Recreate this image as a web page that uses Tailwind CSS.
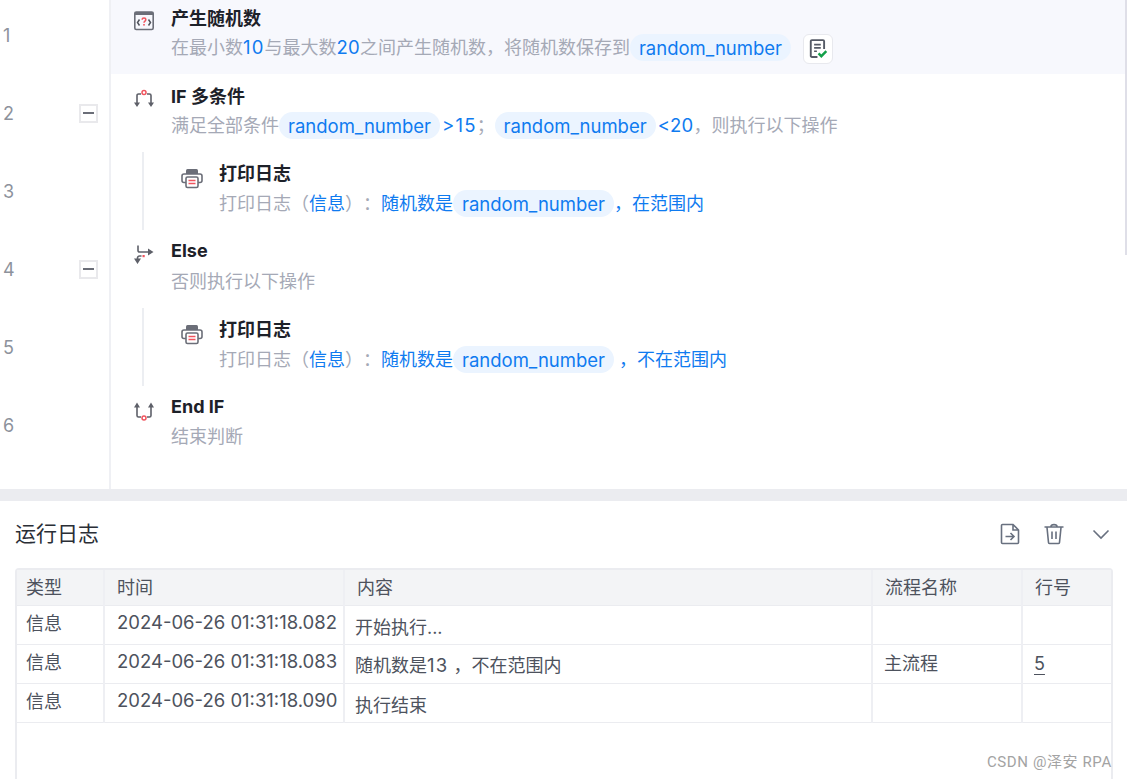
<!DOCTYPE html>
<html lang="zh-CN">

<head>
  <title>运行日志</title>
  <meta charset="UTF-8" />
  <script src="https://cdn.jsdelivr.net/npm/@tailwindcss/browser@4"></script>
</head>

<body class="relative h-[779px] w-[1127px] overflow-hidden bg-white font-['Inter','Noto_Sans_CJK_SC',sans-serif] [text-spacing-trim:space-all]">
  <!-- FLOW -->
  <div class="h-[489px] overflow-hidden">
    <div class="-mt-[4px]">
      <!-- row 1 -->
      <div class="flex h-[78px]">
        <div class="flex w-[111px] shrink-0 items-center border-r-2 border-r-[#eff0f4] pl-[3px] text-[18px] text-[#8d929c]">1</div>
        <div class="flex flex-1 bg-[#f7f8fd] pl-[23px]">
          <svg class="mt-[15px] h-[20px] w-[20px] shrink-0" viewBox="0 0 20 20" fill="none">
            <rect x="0.800" y="1" width="18.400" height="17.500" rx="1.500" stroke="#6b6e78" stroke-width="1.600" />
            <rect x="0.800" y="1" width="18.400" height="3" fill="#6b6e78" />
            <path d="M5.500 8.500 3.500 11.500l2 3M14.500 8.500l2 3-2 3" stroke="#50535c" stroke-width="1.500" />
            <path d="M8.200 8.800c0-2.300 3.600-2.300 3.600 0 0 1.400-1.800 1.300-1.800 3" stroke="#f0555f" stroke-width="1.500" />
            <rect x="9.200" y="13" width="1.600" height="1.600" fill="#f0555f" />
          </svg>
          <div class="ml-[17px] min-w-0">
            <div class="mt-[10px] h-[26px] text-[18px] leading-[26px] font-bold text-[#1d2129]">产生随机数</div>
            <div class="mt-[2px] flex h-[27px] items-start text-[18px] leading-[27px] whitespace-nowrap text-[#a5a9b6]">
              <span>在最小数</span><span class="text-[18.5px] tracking-[1.200px] text-[#0f7bf0]">10</span><span>与最大数</span><span class="text-[18.5px] tracking-[0.200px] text-[#0f7bf0]">20</span><span>之间产生随机数，将随机数保存到</span>
              <span class="flex h-[27px] w-[161px] items-center justify-center rounded-full bg-[#ebf4ff] pt-[2px] text-[18.5px] text-[#0f7bf0]">random_number</span>
              <span class="ml-[12px] flex h-[30px] w-[30px] items-center justify-center rounded-[6px] border border-[#e8e9ee] bg-white">
                <svg class="h-[20px] w-[20px]" viewBox="0 0 18 18" fill="none">
                  <path d="M8.500 16.200H3.500a1 1 0 0 1-1-1V2a1 1 0 0 1 1-1h10a1 1 0 0 1 1 1v7" stroke="#555a66" stroke-width="1.700" />
                  <path d="M5.500 5h6M5.500 8h6M5.500 11h2.500" stroke="#555a66" stroke-width="1.500" />
                  <path d="M9.500 13 12 15.500l4.500-4.500" stroke="#13a04a" stroke-width="2.200" />
                </svg>
              </span>
            </div>
          </div>
        </div>
      </div>
      <!-- row 2 -->
      <div class="flex h-[78px]">
        <div class="flex w-[111px] shrink-0 items-center justify-between border-r-2 border-r-[#eff0f4] pr-[11px] pl-[3px] text-[18px] text-[#8d929c]">
          <span>2</span>
          <span class="flex h-[19px] w-[19px] items-center justify-center border-2 border-[#e9e9ec]"><span class="h-[2px] w-[11px] bg-[#6b6e78]"></span></span>
        </div>
        <div class="flex flex-1 pl-[23px]">
          <svg class="mt-[15px] h-[20px] w-[20px] shrink-0" viewBox="0 0 20 20" fill="none">
            <path d="M3 15V6.500A1.500 1.500 0 0 1 4.500 5H7M17 15V6.500A1.500 1.500 0 0 0 15.500 5H13" stroke="#5e6069" stroke-width="1.600" />
            <path d="M0 13.500h6L3 18zM14 13.500h6L17 18z" fill="#5e6069" />
            <circle cx="10" cy="3.500" r="2" stroke="#f0555f" stroke-width="1.500" fill="#fff" />
          </svg>
          <div class="ml-[17px] min-w-0">
            <div class="mt-[10px] h-[26px] text-[18px] leading-[26px] font-bold text-[#1d2129]">IF 多条件</div>
            <div class="mt-[2px] flex h-[27px] items-center text-[18px] whitespace-nowrap text-[#a5a9b6]">
              <span>满足全部条件</span>
              <span class="flex h-[27px] w-[161px] items-center justify-center rounded-full bg-[#ebf4ff] pt-[2px] text-[18.5px] text-[#0f7bf0]">random_number</span>
              <span class="ml-[2px] text-[18.5px] tracking-[1.200px] text-[#0f7bf0]">&gt;15</span><span class="w-[18px]">；</span>
              <span class="flex h-[27px] w-[161px] items-center justify-center rounded-full bg-[#ebf4ff] pt-[2px] text-[18.5px] text-[#0f7bf0]">random_number</span>
              <span class="ml-[2px] text-[18.5px] tracking-[0.200px] text-[#0f7bf0]">&lt;20</span><span>，则执行以下操作</span>
            </div>
          </div>
        </div>
      </div>
      <!-- row 3 -->
      <div class="flex h-[78px]">
        <div class="flex w-[111px] shrink-0 items-center border-r-2 border-r-[#eff0f4] pl-[3px] text-[18px] text-[#8d929c]">3</div>
        <div class="ml-[31px] flex flex-1 border-l-2 border-l-[#eceef2] pl-[37px]">
          <svg class="mt-[15px] h-[22px] w-[22px] shrink-0" viewBox="0 0 22 22" fill="none">
            <path d="M5 7V3.500A1.500 1.500 0 0 1 6.500 2h9A1.500 1.500 0 0 1 17 3.500V7" fill="#6b6e78" />
            <path d="M5 15.500H3a2 2 0 0 1-2-2V9a2 2 0 0 1 2-2h16a2 2 0 0 1 2 2v4.500a2 2 0 0 1-2 2h-2" stroke="#6b6e78" stroke-width="1.600" />
            <rect x="5" y="10" width="12" height="10.500" rx="1.500" stroke="#6b6e78" stroke-width="1.600" fill="#fff" />
            <path d="M7.500 13.500h7M7.500 16.500h7" stroke="#f0555f" stroke-width="1.600" />
          </svg>
          <div class="ml-[16px] min-w-0">
            <div class="mt-[9px] h-[26px] text-[18px] leading-[26px] font-bold text-[#1d2129]">打印日志</div>
            <div class="mt-[3px] flex h-[27px] items-center text-[18px] whitespace-nowrap text-[#a5a9b6]">
              <span>打印日志（</span><span class="text-[#0f7bf0]">信息</span><span>）：</span><span class="text-[#0f7bf0]">随机数是</span>
              <span class="flex h-[27px] w-[161px] items-center justify-center rounded-full bg-[#ebf4ff] pt-[2px] text-[18.5px] text-[#0f7bf0]">random_number</span>
              <span class="text-[#0f7bf0]">，在范围内</span>
            </div>
          </div>
        </div>
      </div>
      <!-- row 4 -->
      <div class="flex h-[78px]">
        <div class="flex w-[111px] shrink-0 items-center justify-between border-r-2 border-r-[#eff0f4] pr-[11px] pl-[3px] text-[18px] text-[#8d929c]">
          <span>4</span>
          <span class="flex h-[19px] w-[19px] items-center justify-center border-2 border-[#e9e9ec]"><span class="h-[2px] w-[11px] bg-[#6b6e78]"></span></span>
        </div>
        <div class="flex flex-1 pl-[23px]">
          <svg class="mt-[15px] h-[20px] w-[20px] shrink-0" viewBox="0 0 20 20" fill="none">
            <path d="M4 0.500v5a1.500 1.500 0 0 0 1.500 1.500h9" stroke="#5e6069" stroke-width="1.600" />
            <path d="M14 3.500v7L19.500 7zM0 13.500h7L3.500 19z" fill="#5e6069" />
            <path d="M3.500 15v-2a2 2 0 0 1 2-2h2" stroke="#5e6069" stroke-width="1.600" />
            <rect x="8.500" y="10" width="2.200" height="2.200" fill="#f0555f" />
          </svg>
          <div class="ml-[17px] min-w-0">
            <div class="mt-[8px] h-[26px] text-[18px] leading-[26px] font-bold text-[#1d2129]">Else</div>
            <div class="mt-[4px] flex h-[27px] items-center text-[18px] whitespace-nowrap text-[#a5a9b6]">否则执行以下操作</div>
          </div>
        </div>
      </div>
      <!-- row 5 -->
      <div class="flex h-[78px]">
        <div class="flex w-[111px] shrink-0 items-center border-r-2 border-r-[#eff0f4] pl-[3px] text-[18px] text-[#8d929c]">5</div>
        <div class="ml-[31px] flex flex-1 border-l-2 border-l-[#eceef2] pl-[37px]">
          <svg class="mt-[15px] h-[22px] w-[22px] shrink-0" viewBox="0 0 22 22" fill="none">
            <path d="M5 7V3.500A1.500 1.500 0 0 1 6.500 2h9A1.500 1.500 0 0 1 17 3.500V7" fill="#6b6e78" />
            <path d="M5 15.500H3a2 2 0 0 1-2-2V9a2 2 0 0 1 2-2h16a2 2 0 0 1 2 2v4.500a2 2 0 0 1-2 2h-2" stroke="#6b6e78" stroke-width="1.600" />
            <rect x="5" y="10" width="12" height="10.500" rx="1.500" stroke="#6b6e78" stroke-width="1.600" fill="#fff" />
            <path d="M7.500 13.500h7M7.500 16.500h7" stroke="#f0555f" stroke-width="1.600" />
          </svg>
          <div class="ml-[16px] min-w-0">
            <div class="mt-[9px] h-[26px] text-[18px] leading-[26px] font-bold text-[#1d2129]">打印日志</div>
            <div class="mt-[3px] flex h-[27px] items-center text-[18px] whitespace-nowrap text-[#a5a9b6]">
              <span>打印日志（</span><span class="text-[#0f7bf0]">信息</span><span>）：</span><span class="text-[#0f7bf0]">随机数是</span>
              <span class="flex h-[27px] w-[161px] items-center justify-center rounded-full bg-[#ebf4ff] pt-[2px] text-[18.5px] text-[#0f7bf0]">random_number</span>
              <span class="ml-[5px] text-[#0f7bf0]">，不在范围内</span>
            </div>
          </div>
        </div>
      </div>
      <!-- row 6 -->
      <div class="flex h-[103px]">
        <div class="w-[111px] shrink-0 border-r-2 border-r-[#eff0f4] pt-[26px] pl-[3px] text-[18px] leading-[27px] text-[#8d929c]">6</div>
        <div class="flex flex-1 pl-[23px]">
          <svg class="mt-[16px] h-[20px] w-[20px] shrink-0" viewBox="0 0 20 20" fill="none">
            <path d="M3 3v10.500A1.500 1.500 0 0 0 4.500 15H7M17 3v10.500a1.500 1.500 0 0 1-1.500 1.500H13" stroke="#5e6069" stroke-width="1.600" />
            <path d="M0 5.500h6L3 0.500zM14 5.500h6L17 0.500z" fill="#5e6069" />
            <circle cx="10" cy="16" r="2" stroke="#f0555f" stroke-width="1.500" fill="#fff" />
          </svg>
          <div class="ml-[17px] min-w-0">
            <div class="mt-[8px] h-[26px] text-[18px] leading-[26px] font-bold text-[#1d2129]">End IF</div>
            <div class="mt-[3px] flex h-[27px] items-center text-[18px] whitespace-nowrap text-[#a5a9b6]">结束判断</div>
          </div>
        </div>
      </div>
    </div>
  </div>

  <!-- scrollbar thumb -->
  <div class="absolute top-0 right-0 h-[255px] w-[2px] bg-[#dfdfe8]"></div>

  <!-- divider -->
  <div class="h-[12px] bg-[#ebecf0]"></div>

  <!-- LOG -->
  <div class="px-[15px]">
    <div class="flex h-[67px] items-center justify-between pb-[2px]">
      <h2 class="text-[21px] text-[#2a2e36]">运行日志</h2>
      <div class="flex items-center pr-[1px]">
        <svg class="h-[22px] w-[22px]" viewBox="0 0 22 22" fill="none" stroke="#68707f" stroke-width="1.600">
          <path d="M14 1.500H3.500a1 1 0 0 0-1 1v17a1 1 0 0 0 1 1h15a1 1 0 0 0 1-1V7zM14 1.500V7h5.500" />
          <path d="M6.500 13.500h8.500M11.500 10l3.500 3.500-3.500 3.500" />
        </svg>
        <svg class="ml-[22px] h-[22px] w-[22px]" viewBox="0 0 22 22" fill="none" stroke="#68707f" stroke-width="1.600">
          <path d="M1.500 4h19M8 3.500c0-2.500 6-2.500 6 0M4 4.500l1.500 15a1 1 0 0 0 1 1h9a1 1 0 0 0 1-1l1.500-15M9 8.500v7.500M13 8.500v7.500" />
        </svg>
        <svg class="ml-[26px] h-[20px] w-[20px]" viewBox="0 0 20 20" fill="none" stroke="#68707f" stroke-width="1.600">
          <path d="M2.500 6.500 10 14l7.500-7.500" />
        </svg>
      </div>
    </div>
    <div class="h-[211px] w-[1098px] rounded-t-[4px] border-2 border-b-0 border-[#ebecf0]">
      <table class="w-[1094px] table-fixed border-collapse text-left text-[18px] text-[#4d525d]">
        <colgroup>
          <col class="w-[87px]" />
          <col class="w-[240px]" />
          <col class="w-[528px]" />
          <col class="w-[150px]" />
          <col />
        </colgroup>
        <thead class="bg-[#f3f4f6]">
          <tr class="h-[35px] border-b border-b-[#ebecf0]">
            <th class="border-r-2 border-r-[#eeeff3] pl-[9px] font-normal">类型</th>
            <th class="border-r-2 border-r-[#eeeff3] pl-[12px] font-normal">时间</th>
            <th class="border-r-2 border-r-[#eeeff3] pl-[12px] font-normal">内容</th>
            <th class="border-r-2 border-r-[#eeeff3] pl-[12px] font-normal">流程名称</th>
            <th class="pl-[12px] font-normal">行号</th>
          </tr>
        </thead>
        <tbody>
          <tr class="h-[39px] border-b border-b-[#ebecf0]">
            <td class="border-r-2 border-r-[#eeeff3] pb-[3px] pl-[9px]">信息</td>
            <td class="border-r-2 border-r-[#eeeff3] pb-[3px] pl-[12px] text-[18.5px] whitespace-nowrap">2024-06-26 01:31:18.082</td>
            <td class="border-r-2 border-r-[#eeeff3] pt-[5px] pl-[10px]">开始执行...</td>
            <td class="border-r-2 border-r-[#eeeff3] pl-[12px]"></td>
            <td class="pl-[12px]"></td>
          </tr>
          <tr class="h-[39px] border-b border-b-[#ebecf0]">
            <td class="border-r-2 border-r-[#eeeff3] pb-[3px] pl-[9px]">信息</td>
            <td class="border-r-2 border-r-[#eeeff3] pb-[3px] pl-[12px] text-[18.5px] whitespace-nowrap">2024-06-26 01:31:18.083</td>
            <td class="border-r-2 border-r-[#eeeff3] pt-[5px] pl-[10px]">随机数是<span class="text-[18.5px] tracking-[1.200px]">13</span> ，不在范围内</td>
            <td class="border-r-2 border-r-[#eeeff3] pl-[11px]">主流程</td>
            <td class="pl-[11px] underline underline-offset-4">5</td>
          </tr>
          <tr class="h-[39px] border-b border-b-[#ebecf0]">
            <td class="border-r-2 border-r-[#eeeff3] pb-[3px] pl-[9px]">信息</td>
            <td class="border-r-2 border-r-[#eeeff3] pb-[3px] pl-[12px] text-[18.5px] whitespace-nowrap">2024-06-26 01:31:18.090</td>
            <td class="border-r-2 border-r-[#eeeff3] pt-[5px] pl-[10px]">执行结束</td>
            <td class="border-r-2 border-r-[#eeeff3] pl-[12px]"></td>
            <td class="pl-[12px]"></td>
          </tr>
        </tbody>
      </table>
    </div>
  </div>

  <!-- watermark -->
  <div class="absolute top-[752px] left-[987px] text-[15px] leading-[20px] tracking-[0.600px] whitespace-nowrap text-[#a3a3a3] font-['Roboto','Noto_Sans_CJK_SC',sans-serif]">CSDN @泽安 RPA</div>
</body>

</html>
